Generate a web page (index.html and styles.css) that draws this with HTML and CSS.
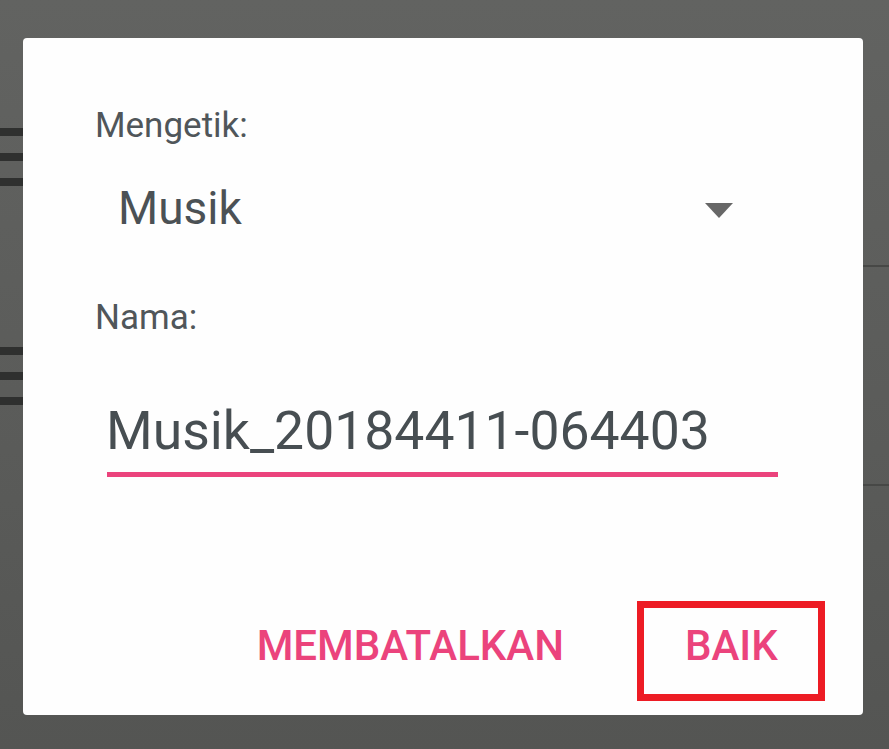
FILE: index.html
```html
<!DOCTYPE html>
<html lang="id">
<head>
<meta charset="utf-8">
<title>Dialog</title>
<link rel="stylesheet" href="styles.css">
</head>
<body>
<div class="screen">
  <div class="list">
    <div class="toolbar"></div>
    <div class="row">
      <div class="handle"><span></span><span></span><span></span></div>
      <div class="row-body"></div>
    </div>
    <div class="row">
      <div class="handle"><span></span><span></span><span></span></div>
      <div class="row-body"></div>
    </div>
  </div>
  <div class="scrim">
    <div class="dialog">
      <div class="label label-type">Mengetik:</div>
      <div class="spinner">
        <span class="spinner-value">Musik</span>
        <span class="spinner-arrow"></span>
      </div>
      <div class="label label-name">Nama:</div>
      <div class="field"><span class="field-text">Musik_20184411-064403</span></div>
      <div class="actions">
        <button class="btn btn-cancel">MEMBATALKAN</button>
        <button class="btn btn-ok">BAIK</button>
      </div>
    </div>
  </div>
</div>
</body>
</html>
```
FILE: styles.css
```css
* { box-sizing: border-box; }
html, body { margin: 0; padding: 0; }
body {
  font-family: Roboto, "Noto Sans", "Liberation Sans", sans-serif;
  background: #5b5c5a;
}
.screen {
  position: relative;
  width: 889px;
  height: 749px;
  overflow: hidden;
  background: linear-gradient(#626361, #5a5b59 60%, #545553);
}
.list { display: flex; flex-direction: column; }
.toolbar { height: 48px; }
.row {
  height: 219px;
  display: flex;
  align-items: stretch;
}
.handle {
  display: flex;
  flex-direction: column;
  justify-content: center;
  gap: 17px;
  margin-left: -17px;
  padding-bottom: 1px;
}
.handle span {
  display: block;
  width: 40px;
  height: 8px;
  background: #2f302f;
}
.row-body {
  flex: 1;
  margin-left: 40px;
  border-bottom: 2px solid #474846;
}
.scrim {
  position: absolute;
  inset: 0;
  padding: 38px 26px 34px 23px;
  display: flex;
}
.dialog {
  flex: 1;
  background: #fefefe;
  border-radius: 4px;
  display: flex;
  flex-direction: column;
  padding: 68px 0 14px 72px;
  color: #4b5155;
}
.label {
  font-size: 35px;
  line-height: 40px;
  color: #50565a;
}
.spinner {
  margin-top: 36px;
  display: flex;
  align-items: center;
  padding-left: 23px;
  padding-right: 130px;
  height: 52px;
}
.spinner-value {
  flex: 1;
  font-size: 46px;
  line-height: 52px;
}
.spinner-arrow {
  width: 0;
  height: 0;
  border-left: 14.5px solid transparent;
  border-right: 14.5px solid transparent;
  border-top: 15px solid #676767;
  margin-top: 4px;
}
.label-name { margin-top: 64px; }
.field {
  margin-top: 62px;
  margin-left: 12px;
  width: 671px;
  padding-bottom: 10px;
  border-bottom: 5px solid #eb437c;
}
.field-text {
  display: block;
  margin-left: -1px;
  font-size: 53.5px;
  line-height: 62px;
  color: #474e52;
}
.actions {
  margin-top: auto;
  display: flex;
  justify-content: flex-end;
  align-items: flex-start;
  padding-right: 38px;
}
.btn {
  font-family: Roboto, "Noto Sans", "Liberation Sans", sans-serif;
  font-weight: 500;
  font-size: 42px;
  line-height: 50px;
  color: #eb437c;
  background: none;
  border: none;
  padding: 0;
  margin: 0;
}
.btn-cancel {
  margin-top: 20px;
  margin-right: 73px;
}
.btn-ok {
  border: 7px solid #ed1c24;
  padding: 13px 41px 23px 41px;
  width: 188px;
  height: 100px;
}
```
